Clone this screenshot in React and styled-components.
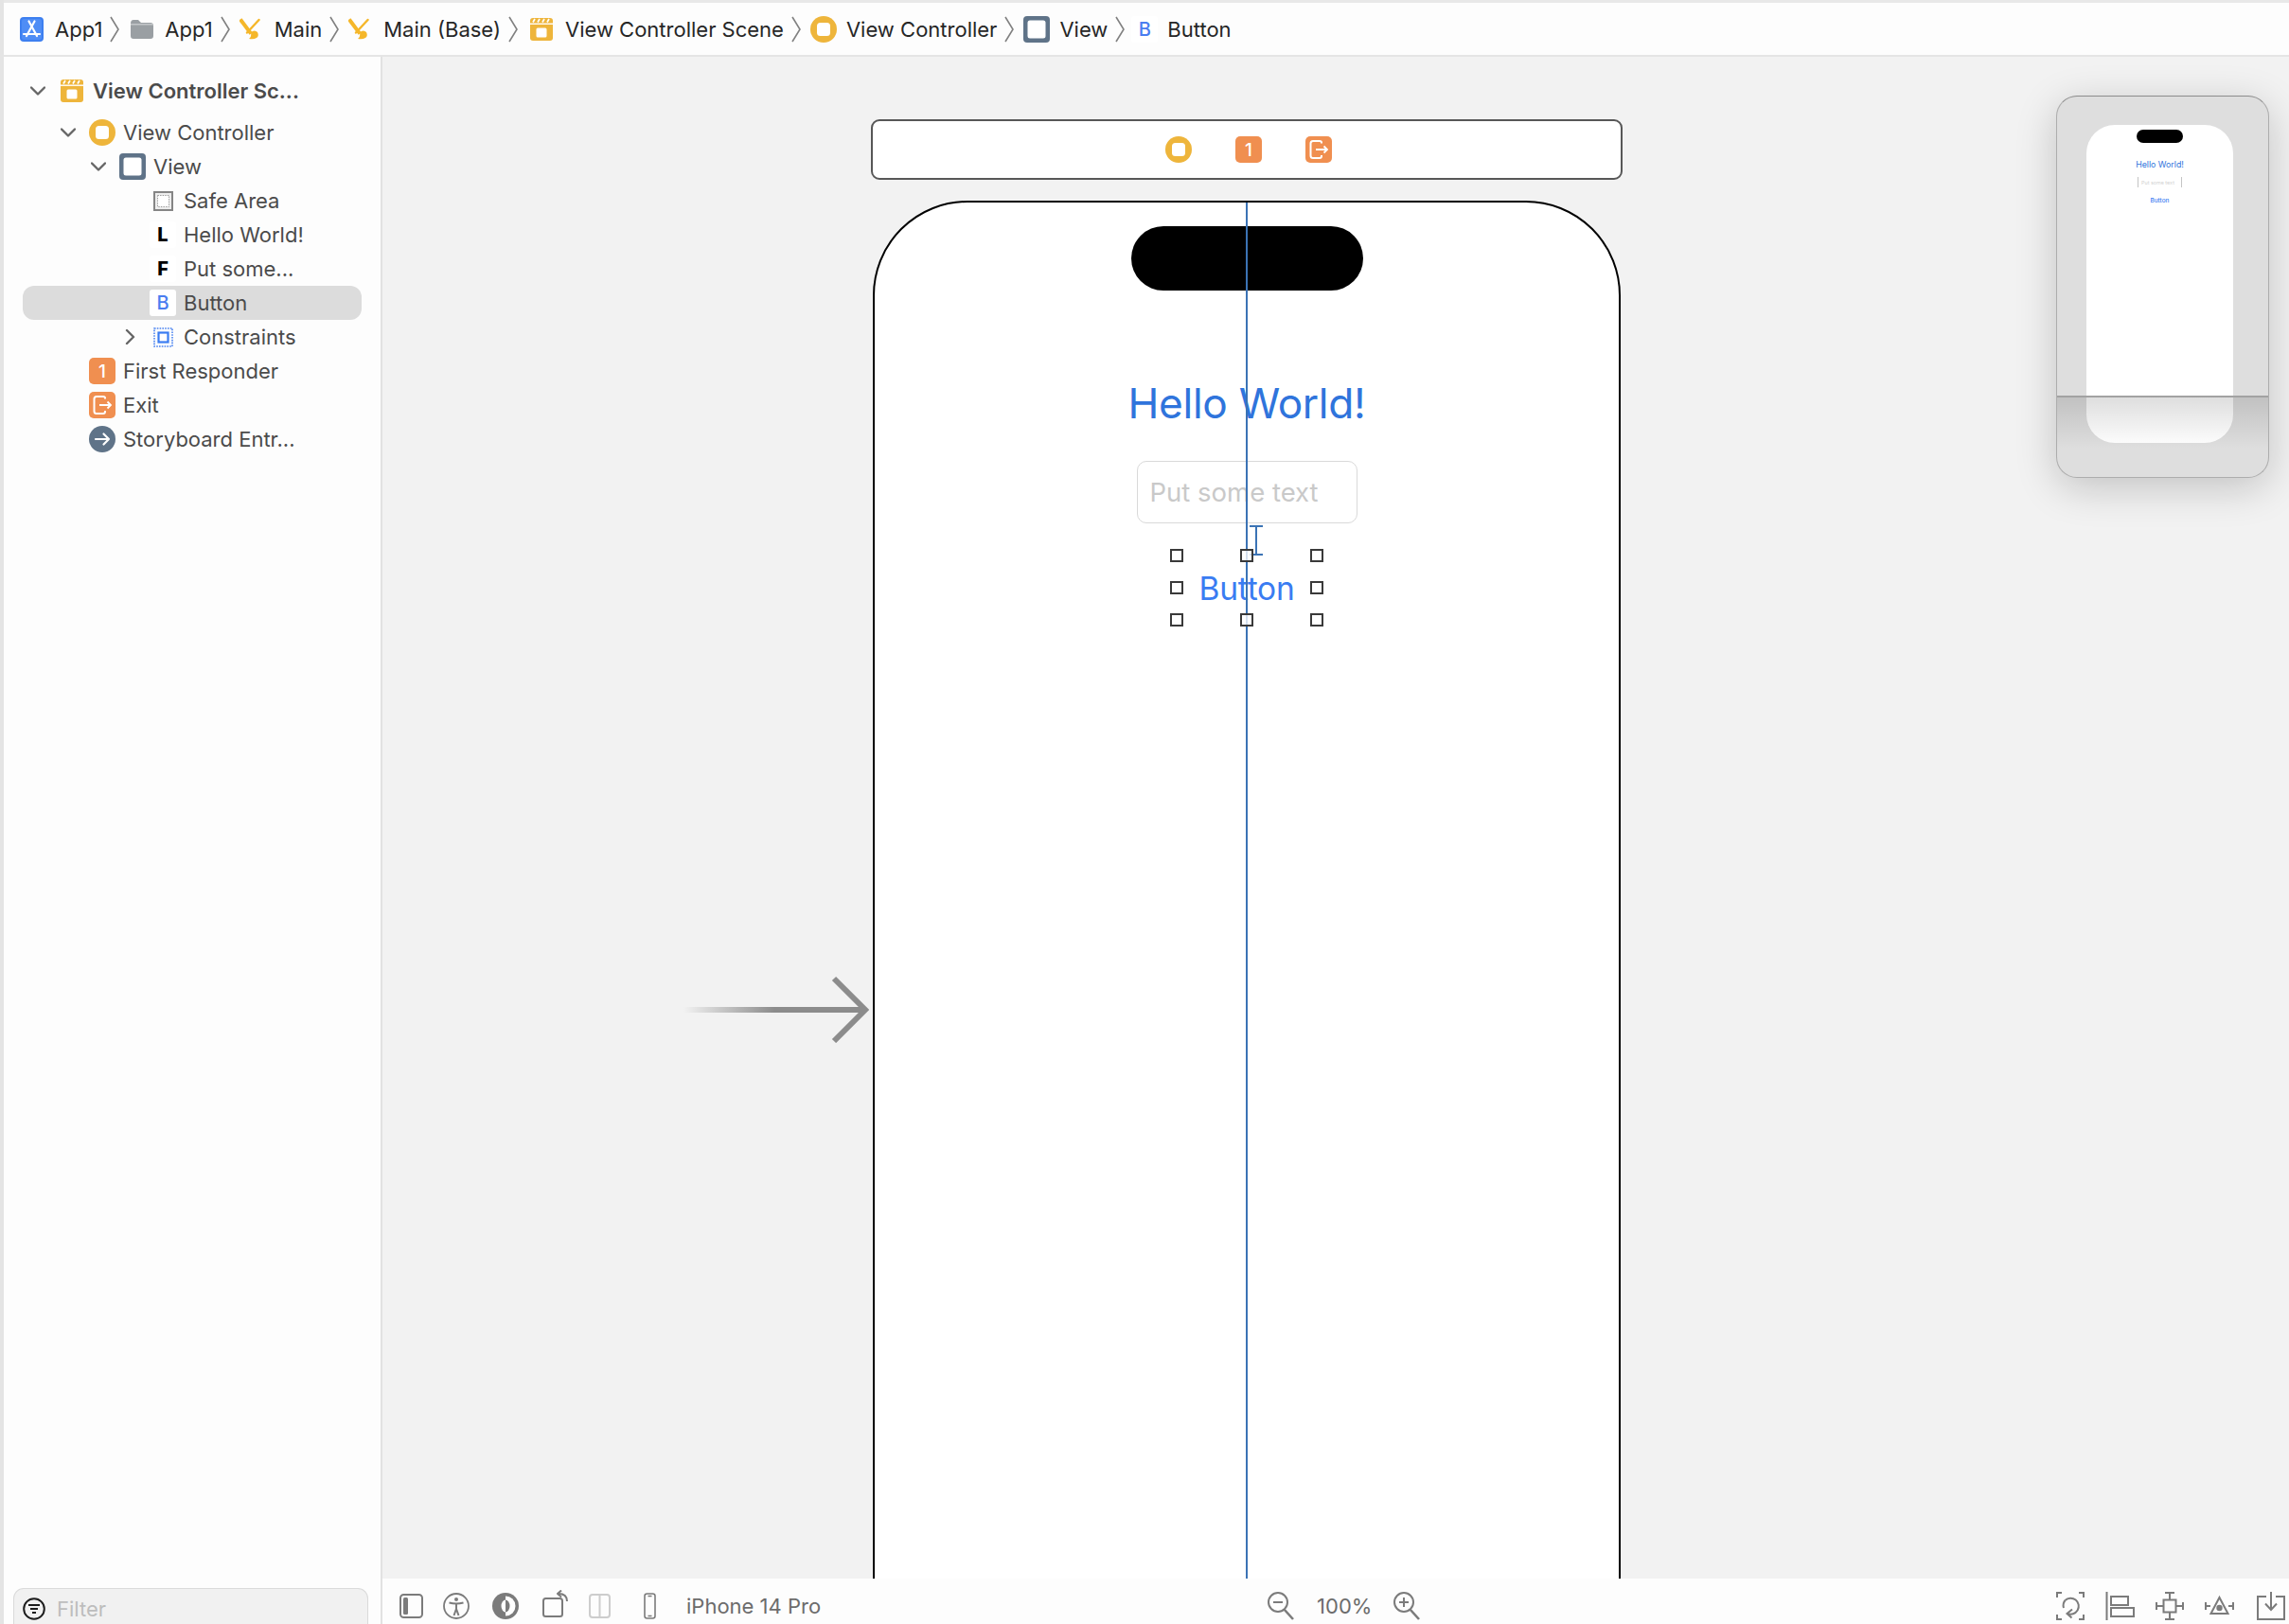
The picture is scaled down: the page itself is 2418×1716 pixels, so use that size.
import { Fragment } from "react";
import styled, { createGlobalStyle } from "styled-components";

const GlobalStyle = createGlobalStyle`
  html, body {
    margin: 0;
    padding: 0;
    background: #fdfdfd;
  }
  * {
    box-sizing: border-box;
  }
`;

const FONT = `Inter, "Liberation Sans", sans-serif`;
const YELLOW = "#eeb53b";
const ORANGE = "#f08f50";
const SLATE = "#5f7388";
const BLUE = "#3a7cf2";
const GRAY = "#7b7b7b";

const Window = styled.div`
  width: 2418px;
  height: 1716px;
  display: flex;
  flex-direction: column;
  overflow: hidden;
  font-family: ${FONT};
  background: #fdfdfd;
  border-left: 4px solid #e4e4e4;
`;

const TopBar = styled.div`
  height: 60px;
  margin-left: -4px;
  padding: 0 0 0 21px;
  display: flex;
  align-items: center;
  background: #fdfdfd;
  border-top: 3px solid #e8e8e8;
  border-bottom: 2px solid #e5e5e5;
`;

const Crumb = styled.div`
  margin-left: ${(props) => props.$lead || 0}px;
  display: flex;
  align-items: center;
  gap: ${(props) => props.$gap || 12}px;
  font-size: 22px;
  color: #262626;
  white-space: nowrap;
`;

const CrumbSep = styled.svg`
  width: 10px;
  height: 28px;
  margin: 0 10px 0 8px;
  flex: none;
`;

const Body = styled.div`
  flex: 1;
  min-height: 0;
  display: flex;
`;

const Sidebar = styled.aside`
  width: 400px;
  flex: none;
  display: flex;
  flex-direction: column;
  background: #fdfdfd;
  border-right: 2px solid #e2e2e2;
`;

const Tree = styled.div`
  padding: 18px 0 0 20px;
`;

const TreeRow = styled.div`
  width: 358px;
  height: 36px;
  padding-left: ${(props) => props.$level * 32}px;
  margin-bottom: ${(props) => (props.$scene ? 8 : 0)}px;
  display: flex;
  align-items: center;
  border-radius: 12px;
  background: ${(props) => (props.$selected ? "#dcdcdc" : "transparent")};
`;

const ChevronSlot = styled.span`
  width: 32px;
  margin-right: 6px;
  flex: none;
  display: flex;
  justify-content: center;
  align-items: center;
`;

const IconSlot = styled.span`
  width: 28px;
  height: 28px;
  margin-right: 8px;
  flex: none;
  display: flex;
  justify-content: center;
  align-items: center;
`;

const TreeLabel = styled.span`
  font-size: 22px;
  font-weight: ${(props) => (props.$bold ? 600 : 400)};
  color: #4b4b4b;
  white-space: nowrap;
`;

const LetterBadge = styled.span`
  width: 28px;
  height: 28px;
  border-radius: 3px;
  display: flex;
  justify-content: center;
  align-items: center;
  background: #fff;
  font-size: 20px;
  font-weight: ${(props) => (props.$blue ? 500 : 800)};
  color: ${(props) => (props.$blue ? "#4a7df0" : "#000")};
`;

const NumberBadge = styled.span`
  width: 28px;
  height: 28px;
  border-radius: 5px;
  display: flex;
  justify-content: center;
  align-items: center;
  background: ${ORANGE};
  font-size: 19px;
  font-weight: 500;
  color: #fff;
`;

const FilterBox = styled.div`
  margin: auto 0 0 10px;
  width: 375px;
  height: 38px;
  padding: 5px 0 0 9px;
  display: flex;
  align-items: center;
  gap: 12px;
  background: #f1f1f1;
  border: 1.5px solid #dadada;
  border-bottom: none;
  border-radius: 11px 11px 0 0;
  font-size: 22px;
  color: #bdbdbd;
`;

const Main = styled.main`
  flex: 1;
  min-width: 0;
  display: flex;
  flex-direction: column;
`;

const Canvas = styled.div`
  position: relative;
  height: 1608px;
  flex: none;
  padding: 66px 0 0 516px;
  overflow: hidden;
  background: #f2f2f2;
`;

const Dock = styled.div`
  width: 794px;
  height: 64px;
  padding-left: 4px;
  display: flex;
  justify-content: center;
  align-items: center;
  gap: 46px;
  background: #fff;
  border: 2px solid #575757;
  border-radius: 9px;
`;

const Device = styled.div`
  position: relative;
  width: 790px;
  height: 1700px;
  margin: 22px 0 0 2px;
  display: flex;
  flex-direction: column;
  align-items: center;
  background: #fff;
  border: 2px solid #000;
  border-radius: 100px 100px 0 0;
`;

const Notch = styled.div`
  width: 245px;
  height: 68px;
  margin-top: 25px;
  background: #000;
  border-radius: 34px;
`;

const HelloTitle = styled.div`
  margin-top: 91px;
  font-size: 44.2px;
  line-height: 56px;
  letter-spacing: -0.3px;
  color: #2f74dc;
  white-space: nowrap;
`;

const TextField = styled.div`
  width: 233px;
  height: 66px;
  margin-top: 33px;
  padding-left: 13px;
  display: flex;
  align-items: center;
  font-size: 27.5px;
  color: #c9c9c9;
  background: #fff;
  border: 1.5px solid #d9d9d9;
  border-radius: 10px;
  white-space: nowrap;
`;

const ButtonBox = styled.div`
  position: relative;
  width: 148px;
  height: 68px;
  margin-top: 34px;
  padding-top: 2px;
  display: flex;
  justify-content: center;
  align-items: center;
  font-size: 33.5px;
  letter-spacing: -0.2px;
  color: ${BLUE};
`;

const HandleGrid = styled.div`
  position: absolute;
  inset: -7px;
  z-index: 3;
  display: grid;
  grid-template-columns: repeat(3, 14px);
  grid-template-rows: repeat(3, 14px);
  justify-content: space-between;
  align-content: space-between;
`;

const Handle = styled.span`
  visibility: ${(props) => (props.$hidden ? "hidden" : "visible")};
  background: rgba(255, 255, 255, 0.78);
  border: 2.5px solid #3a3a3a;
`;

const GuideLine = styled.div`
  position: absolute;
  top: 0;
  bottom: 0;
  left: calc(50% - 1px);
  width: 2px;
  z-index: 2;
  background: #3b73b5;
`;

const IBeam = styled.svg`
  position: absolute;
  left: 396px;
  top: 341px;
  z-index: 2;
`;

const EntryArrow = styled.svg`
  position: absolute;
  left: 318px;
  top: 970px;
`;

const MiniMap = styled.div`
  position: absolute;
  top: 41px;
  right: 21px;
  width: 225px;
  height: 404px;
  padding: 30px 0 0 31px;
  overflow: visible;
  background: #dedede;
  border: 1.5px solid #adadad;
  border-top-color: #8c8c8c;
  border-radius: 22px;
  box-shadow: 0 10px 44px rgba(0, 0, 0, 0.2);
`;

const MiniPhone = styled.div`
  width: 155px;
  height: 336px;
  display: flex;
  flex-direction: column;
  align-items: center;
  background: #fff;
  border-radius: 30px;
`;

const MiniNotch = styled.div`
  width: 49px;
  height: 14px;
  margin-top: 5px;
  background: #000;
  border-radius: 7px;
`;

const MiniHello = styled.div`
  margin-top: 16px;
  font-size: 8.8px;
  line-height: 14px;
  color: #2f74dc;
  white-space: nowrap;
`;

const MiniField = styled.div`
  width: 47px;
  height: 11px;
  margin-top: 6px;
  padding-left: 3px;
  display: flex;
  align-items: center;
  font-size: 5.4px;
  color: #d2d2d2;
  border-left: 1px solid #c4c4c4;
  border-right: 1px solid #c4c4c4;
  white-space: nowrap;
  overflow: hidden;
`;

const MiniButton = styled.div`
  margin-top: 10px;
  font-size: 6.4px;
  line-height: 9px;
  font-weight: 500;
  color: ${BLUE};
`;

const MiniFold = styled.div`
  position: absolute;
  left: 0;
  right: 0;
  top: 316px;
  height: 56px;
  border-top: 2px solid #a2a2a2;
  background: linear-gradient(to bottom, rgba(0, 0, 0, 0.13), rgba(0, 0, 0, 0));
`;

const BottomBar = styled.div`
  height: 48px;
  flex: 1;
  padding: 9px 0 0 18px;
  display: flex;
  align-items: center;
  background: #fdfdfd;
  font-size: 22px;
  color: #6c6c6c;
  white-space: nowrap;
`;

const BarSlot = styled.span`
  margin-left: ${(props) => props.$gap || 0}px;
  margin-bottom: ${(props) => props.$lift || 0}px;
  display: inline-flex;
  align-items: center;
  flex: none;
`;

const Chevron = ({ open }) => (
  <svg width="16" height="16" viewBox="0 0 16 16" fill="none">
    <path
      d={open ? "M1 4.5 L8 11.5 L15 4.5" : "M6 1 L13 8 L6 15"}
      stroke="#666"
      strokeWidth="2.4"
      strokeLinecap="round"
      strokeLinejoin="round"
    />
  </svg>
);

const Separator = () => (
  <CrumbSep viewBox="0 0 10 28" fill="none">
    <path d="M1 1 L9 14 L1 27" stroke="#808080" strokeWidth="1.6" />
  </CrumbSep>
);

const AppIcon = () => (
  <svg width="25" height="26" viewBox="0 0 25 26">
    <rect width="25" height="26" rx="4" fill="#3d7ff0" />
    <rect x="2" y="2" width="21" height="22" rx="2.5" fill="#4f8df5" />
    <path d="M15.5 4.5 L7 20 M9.5 4.5 L18 20 M4 18 H21" stroke="#fff" strokeWidth="2.2" strokeLinecap="round" fill="none" />
  </svg>
);

const FolderIcon = () => (
  <svg width="25" height="22" viewBox="0 0 25 22">
    <path d="M1 5 Q1 1 4 1 H9 L12 4 H22 Q25 4 25 7 V18 Q25 21 22 21 H4 Q1 21 1 18 Z" fill="#9a9fa3" />
    <rect x="1" y="5" width="24" height="1.5" fill="#c4c7c9" />
  </svg>
);

const ToolsIcon = () => (
  <svg width="22" height="24" viewBox="0 0 22 24" fill="none">
    <path d="M2 3 L11 15" stroke="#f5b72a" strokeWidth="4" strokeLinecap="square" />
    <path d="M20.5 2 L8 15.5" stroke="#f5b72a" strokeWidth="2.4" strokeLinecap="round" />
    <path d="M12 15 Q16 12 19 15 Q21 19 18 21 Q15 23 10 22 Q13 20 12 15 Z" fill="#f5b72a" />
  </svg>
);

const SceneIcon = () => (
  <svg width="24" height="24" viewBox="0 0 24 24">
    <rect width="24" height="24" rx="3" fill={YELLOW} />
    <rect y="5.5" width="24" height="1.4" fill="#fff" />
    <path d="M5 1 L3 4.5 M10 1 L8 4.5 M15 1 L13 4.5 M20 1 L18 4.5" stroke="#fff" strokeWidth="1.7" />
    <rect x="6.5" y="10.5" width="11" height="10" rx="1.5" fill="#fff" />
  </svg>
);

const ControllerIcon = () => (
  <svg width="28" height="28" viewBox="0 0 28 28">
    <circle cx="14" cy="14" r="14" fill={YELLOW} />
    <rect x="7" y="7" width="14" height="14" rx="3.5" fill="#fff" />
  </svg>
);

const ViewIcon = () => (
  <svg width="28" height="28" viewBox="0 0 28 28">
    <rect width="28" height="28" rx="4" fill={SLATE} />
    <rect x="4.5" y="4.5" width="19" height="19" rx="2.5" fill="#fff" />
  </svg>
);

const SafeAreaIcon = () => (
  <svg width="21" height="21" viewBox="0 0 21 21" fill="none">
    <rect x="1" y="1" width="19" height="19" fill="#ededed" stroke="#858585" strokeWidth="2" />
    <rect x="4.5" y="4.5" width="12" height="12" fill="#fff" stroke="#9a9a9a" strokeDasharray="1.4 1.2" />
  </svg>
);

const ConstraintsIcon = () => (
  <svg width="21" height="21" viewBox="0 0 21 21" fill="none">
    <rect x="1" y="1" width="19" height="19" stroke="#4a82f0" strokeWidth="1.6" strokeDasharray="1.6 1.2" />
    <rect x="5.5" y="5.5" width="10" height="10" fill="#fff" stroke="#3a7cf2" strokeWidth="2.2" />
  </svg>
);

const ExitIcon = () => (
  <svg width="28" height="28" viewBox="0 0 28 28" fill="none">
    <rect width="28" height="28" rx="5" fill={ORANGE} />
    <path d="M17 7.5 V6.5 Q17 5 15 5 H8 Q5.5 5 5.5 7.5 V20.5 Q5.5 23 8 23 H15 Q17 23 17 21 V20" stroke="#fff" strokeWidth="2" />
    <path d="M11 14 H23 M19.5 10.5 L23 14 L19.5 17.5" stroke="#fff" strokeWidth="1.8" />
  </svg>
);

const EntryIcon = () => (
  <svg width="28" height="28" viewBox="0 0 28 28" fill="none">
    <circle cx="14" cy="14" r="14" fill={SLATE} />
    <path d="M7 14 H21 M15.5 8.5 L21 14 L15.5 19.5" stroke="#fff" strokeWidth="2.2" strokeLinecap="round" strokeLinejoin="round" />
  </svg>
);

const FilterIcon = () => (
  <svg width="24" height="24" viewBox="0 0 24 24" fill="none">
    <circle cx="12" cy="12" r="10.8" stroke="#1d1d1d" strokeWidth="2" />
    <path d="M6 8 H18 M8 12 H16 M10 16 H14" stroke="#1d1d1d" strokeWidth="2" />
  </svg>
);

const ToggleIcon = () => (
  <svg width="25" height="26" viewBox="0 0 25 26" fill="none">
    <rect x="1" y="1" width="23" height="24" rx="3.5" stroke={GRAY} strokeWidth="2" />
    <rect x="4" y="4" width="5" height="18" rx="1.5" fill={GRAY} />
  </svg>
);

const AccessIcon = () => (
  <svg width="28" height="28" viewBox="0 0 28 28" fill="none" stroke={GRAY}>
    <circle cx="14" cy="14" r="13" strokeWidth="1.8" />
    <circle cx="14" cy="7" r="2" fill={GRAY} stroke="none" />
    <path d="M6.5 10.5 Q14 12.5 21.5 10.5 M14 11.5 V17 M14 17 L11.5 24 M14 17 L16.5 24" strokeWidth="2" />
  </svg>
);

const AppearanceIcon = () => (
  <svg width="28" height="28" viewBox="0 0 28 28">
    <circle cx="14" cy="14" r="14" fill={GRAY} />
    <path d="M14 3.5 A10.5 10.5 0 0 1 14 24.5 Z" fill="#fff" />
    <path d="M14 7.5 A4.5 6.5 0 0 0 14 20.5 Z" fill="#fff" />
    <path d="M14 7.5 A4.5 6.5 0 0 1 14 20.5 Z" fill={GRAY} />
  </svg>
);

const RotateIcon = () => (
  <svg width="28" height="29" viewBox="0 0 28 29" fill="none" stroke={GRAY} strokeWidth="2">
    <rect x="1" y="9" width="20" height="19" rx="2.5" />
    <path d="M26 12 Q26 4 17 4" />
    <path d="M20 0.5 L16 4 L20 7.5" strokeLinejoin="round" />
  </svg>
);

const SplitIcon = () => (
  <svg width="23" height="26" viewBox="0 0 23 26" fill="none" stroke="#cdcdcd" strokeWidth="2">
    <rect x="1" y="1" width="21" height="24" rx="3" />
    <path d="M11.5 1 V25" />
  </svg>
);

const PhoneIcon = () => (
  <svg width="13" height="28" viewBox="0 0 13 28" fill="none" stroke={GRAY} strokeWidth="1.6">
    <rect x="1" y="1" width="11" height="26" rx="2.5" />
    <path d="M4.5 3.5 H8.5 M4.5 24.5 H8.5" />
  </svg>
);

const ZoomIcon = ({ plus }) => (
  <svg width="28" height="30" viewBox="0 0 28 30" fill="none" stroke={GRAY} strokeWidth="2">
    <circle cx="11" cy="11" r="10" />
    <path d="M6 11 H16" />
    {plus && <path d="M11 6 V16" />}
    <path d="M17.5 18.5 L27 29" strokeWidth="2.6" />
  </svg>
);

const RefreshFramesIcon = () => (
  <svg width="30" height="30" viewBox="0 0 30 30" fill="none" stroke={GRAY} strokeWidth="2">
    <path d="M1 6 V1 H6 M24 1 H29 V6 M29 24 V29 H24 M6 29 H1 V24" />
    <path d="M9.5 9 A8.5 8.5 0 1 1 12 23" />
    <path d="M9.5 9 A8.5 8.5 0 0 0 8 17" />
    <path d="M17 18.5 L11.5 23 L16.5 27.5" />
  </svg>
);

const AlignIcon = () => (
  <svg width="31" height="30" viewBox="0 0 31 30" fill="none" stroke={GRAY} strokeWidth="2">
    <path d="M1.5 0 V30" />
    <rect x="6" y="5" width="18" height="9" />
    <rect x="6" y="17" width="24" height="9" />
  </svg>
);

const DistributeIcon = () => (
  <svg width="30" height="30" viewBox="0 0 30 30" fill="none" stroke={GRAY} strokeWidth="2">
    <rect x="8.5" y="8.5" width="13" height="13" />
    <path d="M15 1 V8 M10 1 H20 M15 22 V29 M10 29 H20 M1 11 V19 M1 15 H8 M29 11 V19 M29 15 H22" />
  </svg>
);

const ConstrainIcon = () => (
  <svg width="31" height="30" viewBox="0 0 31 30" fill="none" stroke={GRAY} strokeWidth="2">
    <path d="M15.5 6 L24.5 23 H6.5 Z" />
    <circle cx="15.5" cy="17" r="3.2" fill={GRAY} stroke="none" />
    <path d="M1 11 V19 M1 15 H6 M30 11 V19 M30 15 H25" />
  </svg>
);

const EmbedIcon = () => (
  <svg width="30" height="30" viewBox="0 0 30 30" fill="none" stroke={GRAY} strokeWidth="2">
    <path d="M10 5 H1 V29 H29 V5 H20" />
    <path d="M15 0 V19 M9 12.5 L15 19 L21 12.5" />
  </svg>
);

const crumbs = [
  { icon: <AppIcon />, label: "App1" },
  { icon: <FolderIcon />, label: "App1", lead: 1 },
  { icon: <ToolsIcon />, label: "Main", gap: 15 },
  { icon: <ToolsIcon />, label: "Main (Base)", gap: 15 },
  { icon: <SceneIcon />, label: "View Controller Scene", gap: 13, lead: 3 },
  { icon: <ControllerIcon />, label: "View Controller", gap: 10 },
  { icon: <ViewIcon />, label: "View", gap: 10 },
  { icon: <LetterBadge $blue>B</LetterBadge>, label: "Button", gap: 10, lead: -3 },
];

const treeItems = [
  { level: 0, chevron: "open", icon: <SceneIcon />, label: "View Controller Sc...", bold: true, scene: true },
  { level: 1, chevron: "open", icon: <ControllerIcon />, label: "View Controller" },
  { level: 2, chevron: "open", icon: <ViewIcon />, label: "View" },
  { level: 3, icon: <SafeAreaIcon />, label: "Safe Area" },
  { level: 3, icon: <LetterBadge>L</LetterBadge>, label: "Hello World!" },
  { level: 3, icon: <LetterBadge>F</LetterBadge>, label: "Put some..." },
  { level: 3, icon: <LetterBadge $blue>B</LetterBadge>, label: "Button", selected: true },
  { level: 3, chevron: "closed", icon: <ConstraintsIcon />, label: "Constraints" },
  { level: 1, icon: <NumberBadge>1</NumberBadge>, label: "First Responder" },
  { level: 1, icon: <ExitIcon />, label: "Exit" },
  { level: 1, icon: <EntryIcon />, label: "Storyboard Entr..." },
];

export default function App() {
  return (
    <>
      <GlobalStyle />
      <Window>
        <TopBar>
          {crumbs.map((crumb, i) => (
            <Fragment key={i}>
              <Crumb $gap={crumb.gap} $lead={crumb.lead}>
                {crumb.icon}
                <span>{crumb.label}</span>
              </Crumb>
              {i < crumbs.length - 1 && <Separator />}
            </Fragment>
          ))}
        </TopBar>

        <Body>
          <Sidebar>
            <Tree>
              {treeItems.map((item, i) => (
                <TreeRow key={i} $level={item.level} $scene={item.scene} $selected={item.selected}>
                  <ChevronSlot>{item.chevron && <Chevron open={item.chevron === "open"} />}</ChevronSlot>
                  <IconSlot>{item.icon}</IconSlot>
                  <TreeLabel $bold={item.bold}>{item.label}</TreeLabel>
                </TreeRow>
              ))}
            </Tree>
            <FilterBox>
              <FilterIcon />
              <span>Filter</span>
            </FilterBox>
          </Sidebar>

          <Main>
            <Canvas>
              <EntryArrow width="200" height="72" viewBox="0 0 200 72" fill="none">
                <defs>
                  <linearGradient id="entryFade" x1="0" x2="1" y1="0" y2="0">
                    <stop offset="0" stopColor="#f2f2f2" />
                    <stop offset="0.5" stopColor="#8c8c8c" />
                  </linearGradient>
                </defs>
                <rect x="0" y="34" width="192" height="6" fill="url(#entryFade)" />
                <path d="M159 4 L192 37 L159 70" stroke="#8c8c8c" strokeWidth="6" />
              </EntryArrow>

              <Dock>
                <ControllerIcon />
                <NumberBadge>1</NumberBadge>
                <ExitIcon />
              </Dock>

              <Device>
                <GuideLine />
                <Notch />
                <HelloTitle>Hello World!</HelloTitle>
                <TextField>Put some text</TextField>
                <IBeam width="14" height="32" viewBox="0 0 14 32" fill="none" stroke="#3b73b5" strokeWidth="2">
                  <path d="M0 1 H14 M7 1 V31 M0 31 H14" />
                </IBeam>
                <ButtonBox>
                  Button
                  <HandleGrid>
                    {Array.from({ length: 9 }, (_, i) => (
                      <Handle key={i} $hidden={i === 4} />
                    ))}
                  </HandleGrid>
                </ButtonBox>
              </Device>

              <MiniMap>
                <MiniPhone>
                  <MiniNotch />
                  <MiniHello>Hello World!</MiniHello>
                  <MiniField>Put some text</MiniField>
                  <MiniButton>Button</MiniButton>
                </MiniPhone>
                <MiniFold />
              </MiniMap>
            </Canvas>

            <BottomBar>
              <BarSlot><ToggleIcon /></BarSlot>
              <BarSlot $gap={21}><AccessIcon /></BarSlot>
              <BarSlot $gap={24}><AppearanceIcon /></BarSlot>
              <BarSlot $gap={25} $lift={4}><RotateIcon /></BarSlot>
              <BarSlot $gap={21}><SplitIcon /></BarSlot>
              <BarSlot $gap={35}><PhoneIcon /></BarSlot>
              <BarSlot $gap={32}>iPhone 14 Pro</BarSlot>
              <BarSlot $gap={472}><ZoomIcon /></BarSlot>
              <BarSlot $gap={24}>100%</BarSlot>
              <BarSlot $gap={23}><ZoomIcon plus /></BarSlot>
              <BarSlot $gap={672}><RefreshFramesIcon /></BarSlot>
              <BarSlot $gap={22}><AlignIcon /></BarSlot>
              <BarSlot $gap={22}><DistributeIcon /></BarSlot>
              <BarSlot $gap={22}><ConstrainIcon /></BarSlot>
              <BarSlot $gap={24}><EmbedIcon /></BarSlot>
            </BottomBar>
          </Main>
        </Body>
      </Window>
    </>
  );
}
